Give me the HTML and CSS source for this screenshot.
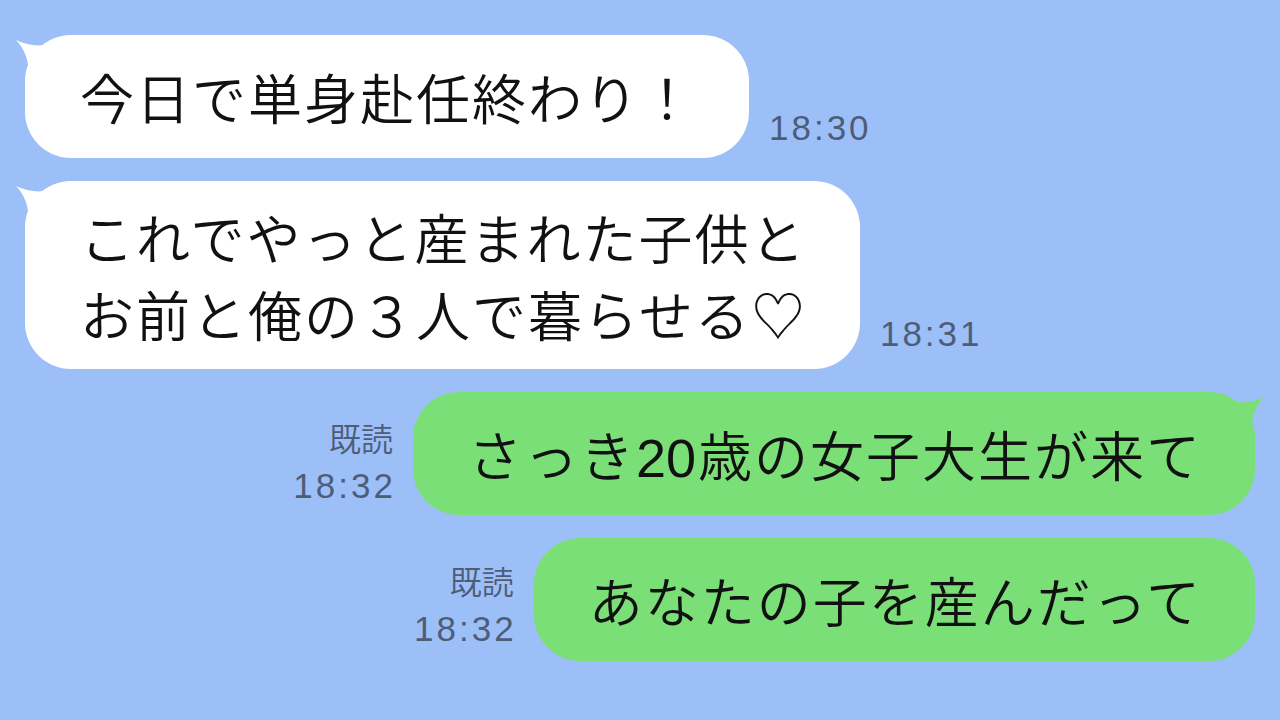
FILE: index.html
```html
<!doctype html>
<html>
<head>
    <meta charset="utf-8">
    <title>トーク</title>
    <link rel="stylesheet" href="styles.css">
</head>

<body>
<div class="chat">
    <div class="row">
        <div class="bubble white">
            <svg class="tail" viewBox="0 0 52 50"><path d="M1 5 Q28 18 52 0 L52 48 L14 42 Q14 18 1 5 Z"/></svg>
            今日で単身赴任終わり！
        </div>
        <div class="time">18:30</div>
    </div>
    <div class="row">
        <div class="bubble white multi">
            <svg class="tail" viewBox="0 0 52 50"><path d="M1 5 Q28 18 52 0 L52 48 L14 42 Q14 18 1 5 Z"/></svg>
            これでやっと産まれた子供と<br>お前と俺の３人で暮らせる♡
        </div>
        <div class="time t2">18:31</div>
    </div>
    <div class="row mine">
        <div class="meta m1">
            <div class="read">既読</div>
            <div class="time">18:32</div>
        </div>
        <div class="bubble green">
            <svg class="tail" viewBox="0 0 52 50"><path d="M1 5 Q28 18 52 0 L52 48 L14 42 Q14 18 1 5 Z"/></svg>
            さっき<span class="num">20</span>歳の女子大生が来て
        </div>
    </div>
    <div class="row mine">
        <div class="meta">
            <div class="read">既読</div>
            <div class="time">18:32</div>
        </div>
        <div class="bubble green">あなたの子を産んだって</div>
    </div>
</div>
</body>

</html>
```

FILE: styles.css
```css
body {
    margin: 0;
    padding: 0;
    background-color: #9dbff8;
    font-family: "Noto Sans CJK JP", "Noto Sans", sans-serif;
}

.chat {
    padding: 35px 25px;
    display: flex;
    flex-direction: column;
    gap: 23px;
}

.row {
    display: flex;
    align-items: flex-end;
    gap: 20px;
}

.row.mine {
    justify-content: flex-end;
}

.bubble {
    position: relative;
    padding: 23px 53px 23px 55px;
    border-radius: 46px;
    font-size: 54px;
    font-weight: 350;
    line-height: 77px;
    letter-spacing: 2px;
    color: #111;
    white-space: nowrap;
}

.bubble .num {
    font-family: "Liberation Sans", Arial, sans-serif;
    line-height: 1;
    letter-spacing: 0;
    margin-right: 2px;
}

.bubble.multi {
    padding-top: 17px;
    padding-bottom: 17px;
}

.white {
    background-color: #fff;
}

.green {
    background-color: #7bdf78;
}

/*吹き出しのしっぽ*/
.tail {
    position: absolute;
    top: 0;
    left: -10px;
    width: 52px;
    height: 50px;
}

.white .tail path {
    fill: #fff;
}

.green .tail {
    left: auto;
    right: -10px;
    transform: scaleX(-1);
}

.green .tail path {
    fill: #7bdf78;
}

.time {
    font-family: "Liberation Sans", Arial, sans-serif;
    font-size: 35px;
    line-height: 40px;
    letter-spacing: 3px;
    color: #4d5d78;
    padding-bottom: 10px;
}

.time.t2 {
    padding-bottom: 15px;
}

.meta {
    text-align: right;
    margin-right: -3px;
}

.meta .time {
    padding-bottom: 12px;
}

.meta.m1 .time {
    padding-bottom: 9px;
}

.read {
    font-size: 32px;
    font-weight: 350;
    line-height: 40px;
    margin-bottom: 9px;
    margin-right: 3px;
    color: #4d5d78;
}
```
